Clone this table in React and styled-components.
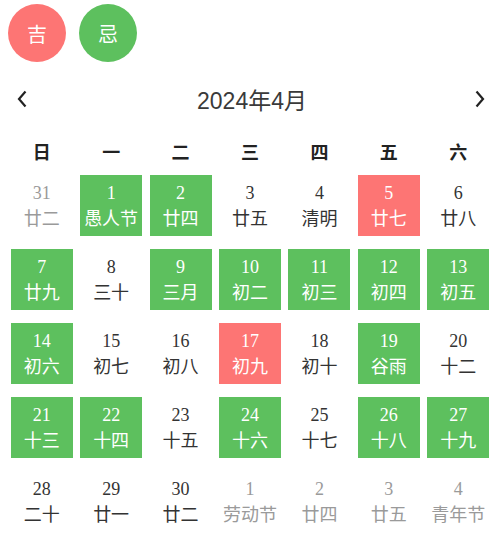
import React from 'react';
import styled, {createGlobalStyle} from 'styled-components';

const GlobalStyle = createGlobalStyle`
  body {
    margin: 0;
    background: #fff;
    font-family: "Noto Sans CJK SC", "Noto Sans", sans-serif;
    color: #333;
  }
`;

const GREEN = '#5dc05e';
const RED = '#fd7574';

const Page = styled.div`
  width: 500px;
  padding: 4px 7px 0;
  box-sizing: border-box;
`;

const Legend = styled.div`
  display: flex;
  gap: 13px;
  padding-left: 1px;
`;

const Badge = styled.div`
  width: 58px;
  height: 58px;
  border-radius: 50%;
  background: ${p => p.$color};
  color: #fff;
  display: flex;
  align-items: center;
  justify-content: center;
  font-size: 20px;
`;

const Nav = styled.div`
  display: flex;
  align-items: center;
  justify-content: space-between;
  height: 40px;
  margin-top: 17px;
  padding: 0 6px 0 8px;
`;

const Arrow = styled.button`
  border: 0;
  background: none;
  padding: 0;
  width: 14px;
  height: 20px;
  display: flex;
  align-items: center;
  justify-content: center;
  color: #222;
`;

const Title = styled.div`
  font-family: "Liberation Sans", "Noto Sans CJK SC", sans-serif;
  font-size: 23px;
  color: #3a3a3a;
  margin-left: 2px;
`;

const Grid = styled.div`
  display: grid;
  grid-template-columns: repeat(7, 1fr);
  row-gap: 13px;
  justify-items: center;
`;

const WeekDay = styled.div`
  height: 34px;
  margin-top: 15px;
  margin-bottom: -6px;
  display: flex;
  align-items: center;
  font-size: 18px;
  font-weight: 700;
  color: #222;
`;

const Cell = styled.div`
  width: 62px;
  height: 61px;
  box-sizing: border-box;
  padding-top: 7px;
  background: ${p => (p.$tone === 'good' ? GREEN : p.$tone === 'bad' ? RED : 'transparent')};
  color: ${p => (p.$tone ? '#fff' : p.$muted ? '#9a9a9a' : '#333')};
  display: flex;
  flex-direction: column;
  align-items: center;
`;

const Num = styled.div`
  font-family: "Liberation Serif", "Noto Sans CJK SC", serif;
  font-size: 18px;
  line-height: 22px;
`;

const Lunar = styled.div`
  font-size: 18px;
  line-height: 26px;
  white-space: nowrap;
`;

const Chevron = ({dir}) => (
    <svg width="12" height="18" viewBox="0 0 12 18" fill="none" stroke="currentColor" strokeWidth="2.2">
        {dir === 'left' ? <path d="M9.5 1.5 L3 9 L9.5 16.5"/> : <path d="M2.5 1.5 L9 9 L2.5 16.5"/>}
    </svg>
);

const weekDays = ['日', '一', '二', '三', '四', '五', '六'];

// [day, lunar, tone, muted]
const days = [
    ['31', '廿二', null, true], ['1', '愚人节', 'good'], ['2', '廿四', 'good'], ['3', '廿五'], ['4', '清明'], ['5', '廿七', 'bad'], ['6', '廿八'],
    ['7', '廿九', 'good'], ['8', '三十'], ['9', '三月', 'good'], ['10', '初二', 'good'], ['11', '初三', 'good'], ['12', '初四', 'good'], ['13', '初五', 'good'],
    ['14', '初六', 'good'], ['15', '初七'], ['16', '初八'], ['17', '初九', 'bad'], ['18', '初十'], ['19', '谷雨', 'good'], ['20', '十二'],
    ['21', '十三', 'good'], ['22', '十四', 'good'], ['23', '十五'], ['24', '十六', 'good'], ['25', '十七'], ['26', '十八', 'good'], ['27', '十九', 'good'],
    ['28', '二十'], ['29', '廿一'], ['30', '廿二'], ['1', '劳动节', null, true], ['2', '廿四', null, true], ['3', '廿五', null, true], ['4', '青年节', null, true],
];

const App = () => (
    <Page>
        <GlobalStyle/>
        <Legend>
            <Badge $color={RED}>吉</Badge>
            <Badge $color={GREEN}>忌</Badge>
        </Legend>
        <Nav>
            <Arrow aria-label="上个月"><Chevron dir="left"/></Arrow>
            <Title>2024年4月</Title>
            <Arrow aria-label="下个月"><Chevron dir="right"/></Arrow>
        </Nav>
        <Grid>
            {weekDays.map(d => <WeekDay key={d}>{d}</WeekDay>)}
            {days.map(([n, l, tone, muted], i) => (
                <Cell key={i} $tone={tone} $muted={muted}>
                    <Num>{n}</Num>
                    <Lunar>{l}</Lunar>
                </Cell>
            ))}
        </Grid>
    </Page>
);

export default App;
